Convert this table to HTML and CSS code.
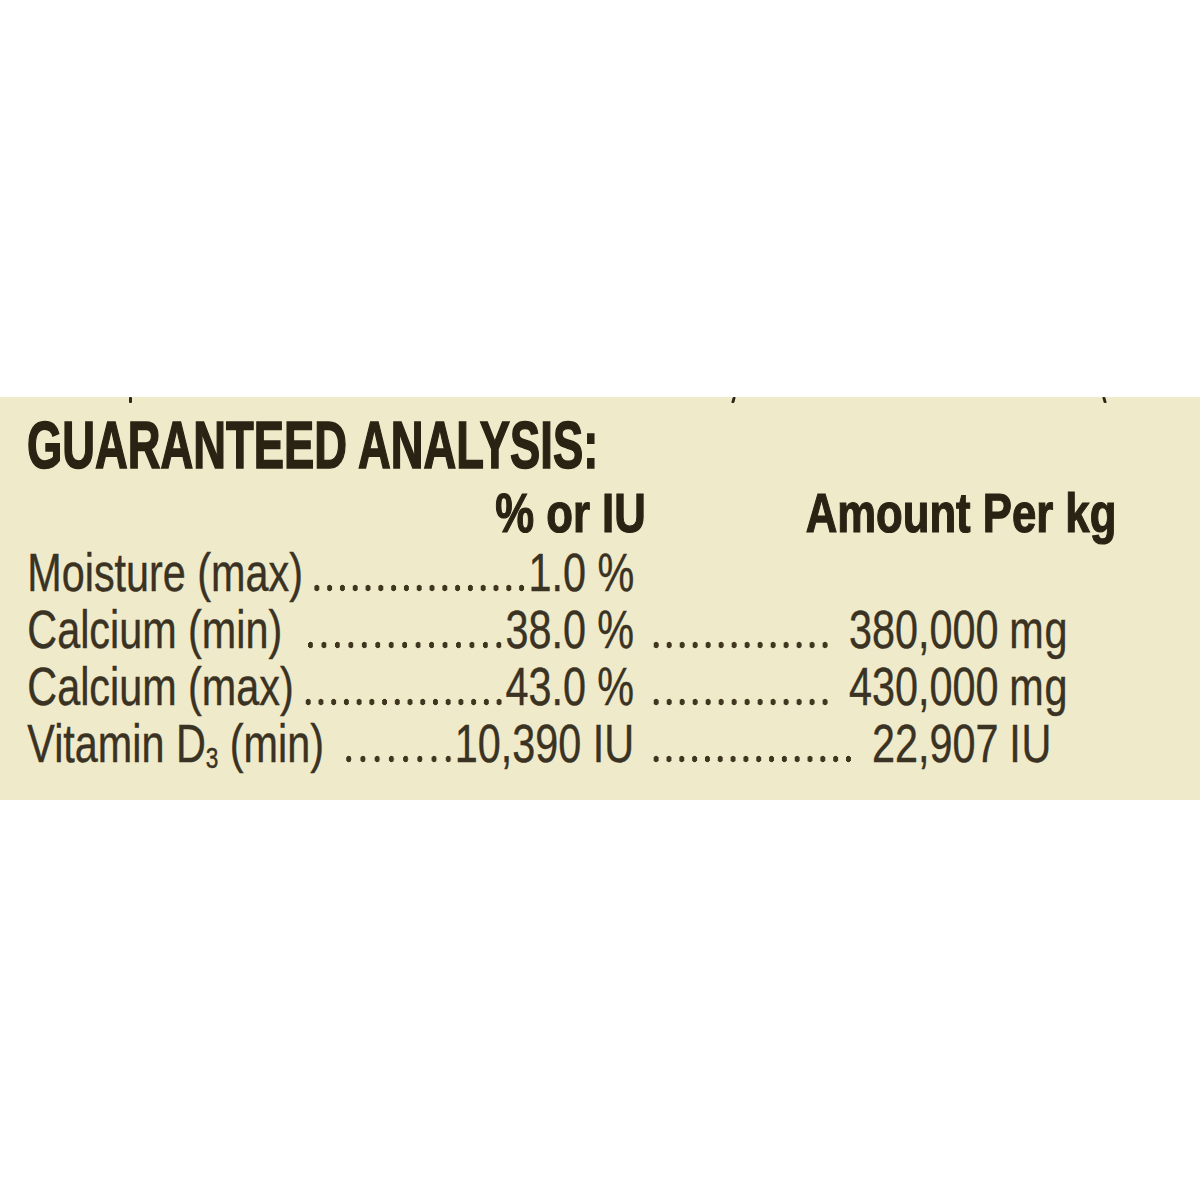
FILE: index.html
```html
<!DOCTYPE html>
<html lang="en">
<head>
<meta charset="utf-8">
<title>Guaranteed Analysis</title>
<link rel="stylesheet" href="styles.css">
</head>
<body>
<div class="band">
  <span class="tick tick-1"></span>
  <span class="tick tick-2"></span>
  <span class="tick tick-3"></span>
  <h1 class="title">GUARANTEED ANALYSIS:</h1>
  <div class="table">
    <div class="head-row">
      <span class="h-pct">% or IU</span>
      <span class="h-amt">Amount Per kg</span>
    </div>
    <div class="row">
      <div class="c1"><span class="label">Moisture (max)</span><span class="lead"></span><span class="val">1.0 %</span></div>
    </div>
    <div class="row">
      <div class="c1"><span class="label">Calcium (min)</span><span class="lead lead-gap"></span><span class="val">38.0 %</span></div>
      <div class="c2"><span class="lead"></span><span class="num">380,000</span></div>
      <div class="c3">mg</div>
    </div>
    <div class="row">
      <div class="c1"><span class="label">Calcium (max)</span><span class="lead"></span><span class="val">43.0 %</span></div>
      <div class="c2"><span class="lead"></span><span class="num">430,000</span></div>
      <div class="c3">mg</div>
    </div>
    <div class="row">
      <div class="c1"><span class="label">Vitamin D<span class="sub">3</span> (min)</span><span class="lead lead-short"></span><span class="val">10,390 IU</span></div>
      <div class="c2"><span class="lead"></span><span class="num">22,907</span></div>
      <div class="c3">IU</div>
    </div>
  </div>
</div>
</body>
</html>
```
FILE: styles.css
```css
html, body {
  margin: 0;
  padding: 0;
  background: #ffffff;
}

body {
  font-family: "Liberation Sans", Arial, sans-serif;
  overflow: hidden;
}

.band {
  position: relative;
  margin-top: 397px;
  height: 403px;
  box-sizing: border-box;
  padding-top: 14px;
  background: #efeaca;
  overflow: hidden;
}

.tick {
  position: absolute;
  top: 0;
  width: 3px;
  height: 6px;
  background: #2e2718;
  border-radius: 1px;
}
.tick-1 { left: 129px; }
.tick-2 { left: 732px; transform: skewX(-15deg); }
.tick-3 { left: 1103px; transform: skewX(15deg); }

.title {
  margin: 0 0 0 27px;
  font-size: 67px;
  line-height: 67px;
  font-weight: 700;
  color: #2a2313;
  -webkit-text-stroke: 1.6px #2a2313;
  white-space: nowrap;
  transform: scaleX(0.677);
  transform-origin: left center;
  width: 900px;
}

.table {
  width: 1400px;
  padding-left: 35px;
  box-sizing: border-box;
  transform: scaleX(0.78);
  transform-origin: left top;
  color: #3a3222;
}

.head-row {
  display: flex;
  margin-top: 7px;
  font-size: 56px;
  line-height: 56px;
  font-weight: 700;
  color: #2a2313;
  -webkit-text-stroke: 1.2px #2a2313;
  white-space: nowrap;
}

.h-pct { margin-left: 600px; }
.h-amt { margin-left: 205px; }

.row {
  display: flex;
  font-size: 53px;
  line-height: 57px;
  white-space: nowrap;
  -webkit-text-stroke: 0.4px #3a3222;
}

.head-row + .row { margin-top: 3px; }

.c1 {
  display: flex;
  width: 778px;
}

.c2 {
  display: flex;
  width: 467px;
  padding-left: 20px;
  box-sizing: border-box;
}

.c3 {
  margin-left: 14px;
  letter-spacing: 1px;
}

.label { margin-right: 10px; }

.lead {
  flex: 1;
  background-image: radial-gradient(circle at center, #40361f 0 3px, rgba(64, 54, 31, 0) 3.6px);
  background-size: 16.3px 8px;
  background-repeat: space no-repeat;
  background-position: 0 40px;
}

.c1 .lead-gap { margin-left: 18px; }
.c1 .lead-short { margin-left: 14px; }

.c2 .lead { margin-right: 22px; }

.sub {
  font-size: 29px;
  line-height: 0;
  vertical-align: -6px;
}
```
